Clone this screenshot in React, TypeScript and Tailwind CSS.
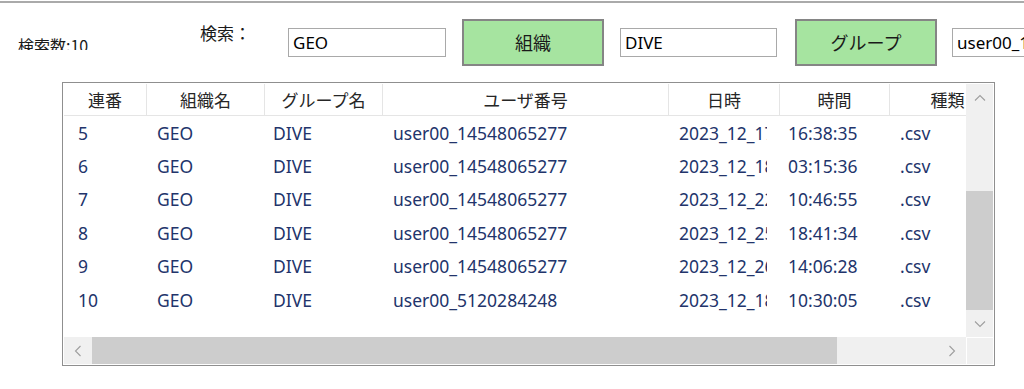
import React from "react";

const rows = [
  { n: "5", org: "GEO", grp: "DIVE", user: "user00_14548065277", date: "2023_12_17", time: "16:38:35", kind: ".csv" },
  { n: "6", org: "GEO", grp: "DIVE", user: "user00_14548065277", date: "2023_12_18", time: "03:15:36", kind: ".csv" },
  { n: "7", org: "GEO", grp: "DIVE", user: "user00_14548065277", date: "2023_12_22", time: "10:46:55", kind: ".csv" },
  { n: "8", org: "GEO", grp: "DIVE", user: "user00_14548065277", date: "2023_12_25", time: "18:41:34", kind: ".csv" },
  { n: "9", org: "GEO", grp: "DIVE", user: "user00_14548065277", date: "2023_12_26", time: "14:06:28", kind: ".csv" },
  { n: "10", org: "GEO", grp: "DIVE", user: "user00_5120284248", date: "2023_12_18", time: "10:30:05", kind: ".csv" },
];

const headers = [
  { t: "連番", c: "w-[83px]" },
  { t: "組織名", c: "w-[118px]" },
  { t: "グループ名", c: "w-[118px]" },
  { t: "ユーザ番号", c: "w-[286px]" },
  { t: "日時", c: "w-[111px]" },
  { t: "時間", c: "w-[110px]" },
  { t: "種類", c: "w-[116px]" },
];

function Chevron({ dir }: { dir: "up" | "down" | "left" | "right" }) {
  const pts: Record<string, string> = {
    up: "1,6.5 6,1.5 11,6.5",
    down: "1,1.5 6,6.5 11,1.5",
    left: "6.5,1 1.5,6 6.5,11",
    right: "1.5,1 6.5,6 1.5,11",
  };
  const vertical = dir === "up" || dir === "down";
  return (
    <svg width={vertical ? 12 : 8} height={vertical ? 8 : 12} viewBox={vertical ? "0 0 12 8" : "0 0 8 12"}>
      <polyline points={pts[dir]} fill="none" stroke="#9e9e9e" strokeWidth="1.1" />
    </svg>
  );
}

export default function App() {
  return (
    <div className="w-[1024px] h-[389px] bg-white overflow-hidden font-['Noto_Sans','Noto_Sans_CJK_JP',sans-serif]">
      <div className="mt-[1px] h-[2px] bg-[#aaaaaa]" />
      <div className="flex h-[79px] items-start">
        <div className="ml-[18px] w-[182px] h-[47px] shrink-0 overflow-hidden pt-[30px]">
          <div className="text-[16px] leading-[24px] text-[#1a1a1a] font-['Noto_Sans_CJK_JP','Noto_Sans',sans-serif]">検索数:10</div>
        </div>
        <div className="w-[88px] shrink-0 mt-[18px] text-[17px] leading-[24px] text-[#1a1a1a] font-['Noto_Sans_CJK_JP',sans-serif]">検索：</div>
        <div className="w-[158px] h-[29px] shrink-0 mt-[25px] border border-[#a9a9a9] pl-[4px] flex items-center text-[17px] text-black">GEO</div>
        <div className="ml-[16px] w-[142px] h-[47px] shrink-0 mt-[16px] border-2 border-[#858585] bg-[#a6e4a0] flex items-center justify-center text-[18px] text-[#1a1a1a] font-['Noto_Sans_CJK_JP',sans-serif]">組織</div>
        <div className="ml-[16px] w-[157px] h-[29px] shrink-0 mt-[25px] border border-[#a9a9a9] pl-[4px] flex items-center text-[17px] text-black">DIVE</div>
        <div className="ml-[18px] w-[142px] h-[47px] shrink-0 mt-[16px] border-2 border-[#858585] bg-[#a6e4a0] flex items-center justify-center text-[18px] text-[#1a1a1a] font-['Noto_Sans_CJK_JP',sans-serif]">グループ</div>
        <div className="ml-[15px] w-[158px] h-[29px] shrink-0 mt-[25px] border border-[#a9a9a9] pl-[4px] flex items-center text-[17px] text-black whitespace-nowrap overflow-hidden">user00_14548065277</div>
      </div>
      <div className="ml-[62px] w-[933px] h-[284px] border border-[#8f8f8f] p-[1px] flex flex-col">
        <div className="flex h-[253px]">
          <div className="w-[902px] h-[253px] overflow-hidden flex flex-col">
            <div className="flex h-[32px] shrink-0 border-b border-[#e5e5e5]">
              {headers.map((h, i) => (
                <div
                  key={i}
                  className={`${h.c} shrink-0 h-full flex items-center justify-center border-r border-[#e5e5e5] text-[17px] text-[#262626] font-['Noto_Sans_CJK_JP',sans-serif] whitespace-nowrap`}
                >
                  {h.t}
                </div>
              ))}
            </div>
            {rows.map((r, i) => (
              <div key={i} className="flex h-[33.4px] shrink-0 items-center text-[17.5px] text-[#22346b] whitespace-nowrap">
                <div className="w-[83px] shrink-0 pl-[14px]">{r.n}</div>
                <div className="w-[118px] shrink-0 pl-[10px]">{r.org}</div>
                <div className="w-[118px] shrink-0 pl-[8px]">{r.grp}</div>
                <div className="w-[286px] shrink-0 pl-[10px]">{r.user}</div>
                <div className="w-[111px] shrink-0 pl-[10px]">
                  <div className="w-[88px] overflow-hidden">{r.date}</div>
                </div>
                <div className="w-[110px] shrink-0 pl-[8px]">{r.time}</div>
                <div className="w-[116px] shrink-0 pl-[10px]">{r.kind}</div>
              </div>
            ))}
          </div>
          <div className="w-[27px] h-[253px] bg-[#f0f0f0] flex flex-col">
            <div className="h-[27px] flex items-center justify-center">
              <Chevron dir="up" />
            </div>
            <div className="h-[80px]" />
            <div className="h-[119px] bg-[#cdcdcd]" />
            <div className="h-[27px] flex items-center justify-center">
              <Chevron dir="down" />
            </div>
          </div>
        </div>
        <div className="flex h-[27px]">
          <div className="w-[902px] h-[27px] bg-[#f0f0f0] flex">
            <div className="w-[28px] flex items-center justify-center">
              <Chevron dir="left" />
            </div>
            <div className="w-[745px] bg-[#cdcdcd]" />
            <div className="flex-1" />
            <div className="w-[28px] flex items-center justify-center">
              <Chevron dir="right" />
            </div>
          </div>
          <div className="w-[27px] h-[27px] bg-[#f0f0f0] border-l border-t border-white" />
        </div>
      </div>
    </div>
  );
}
